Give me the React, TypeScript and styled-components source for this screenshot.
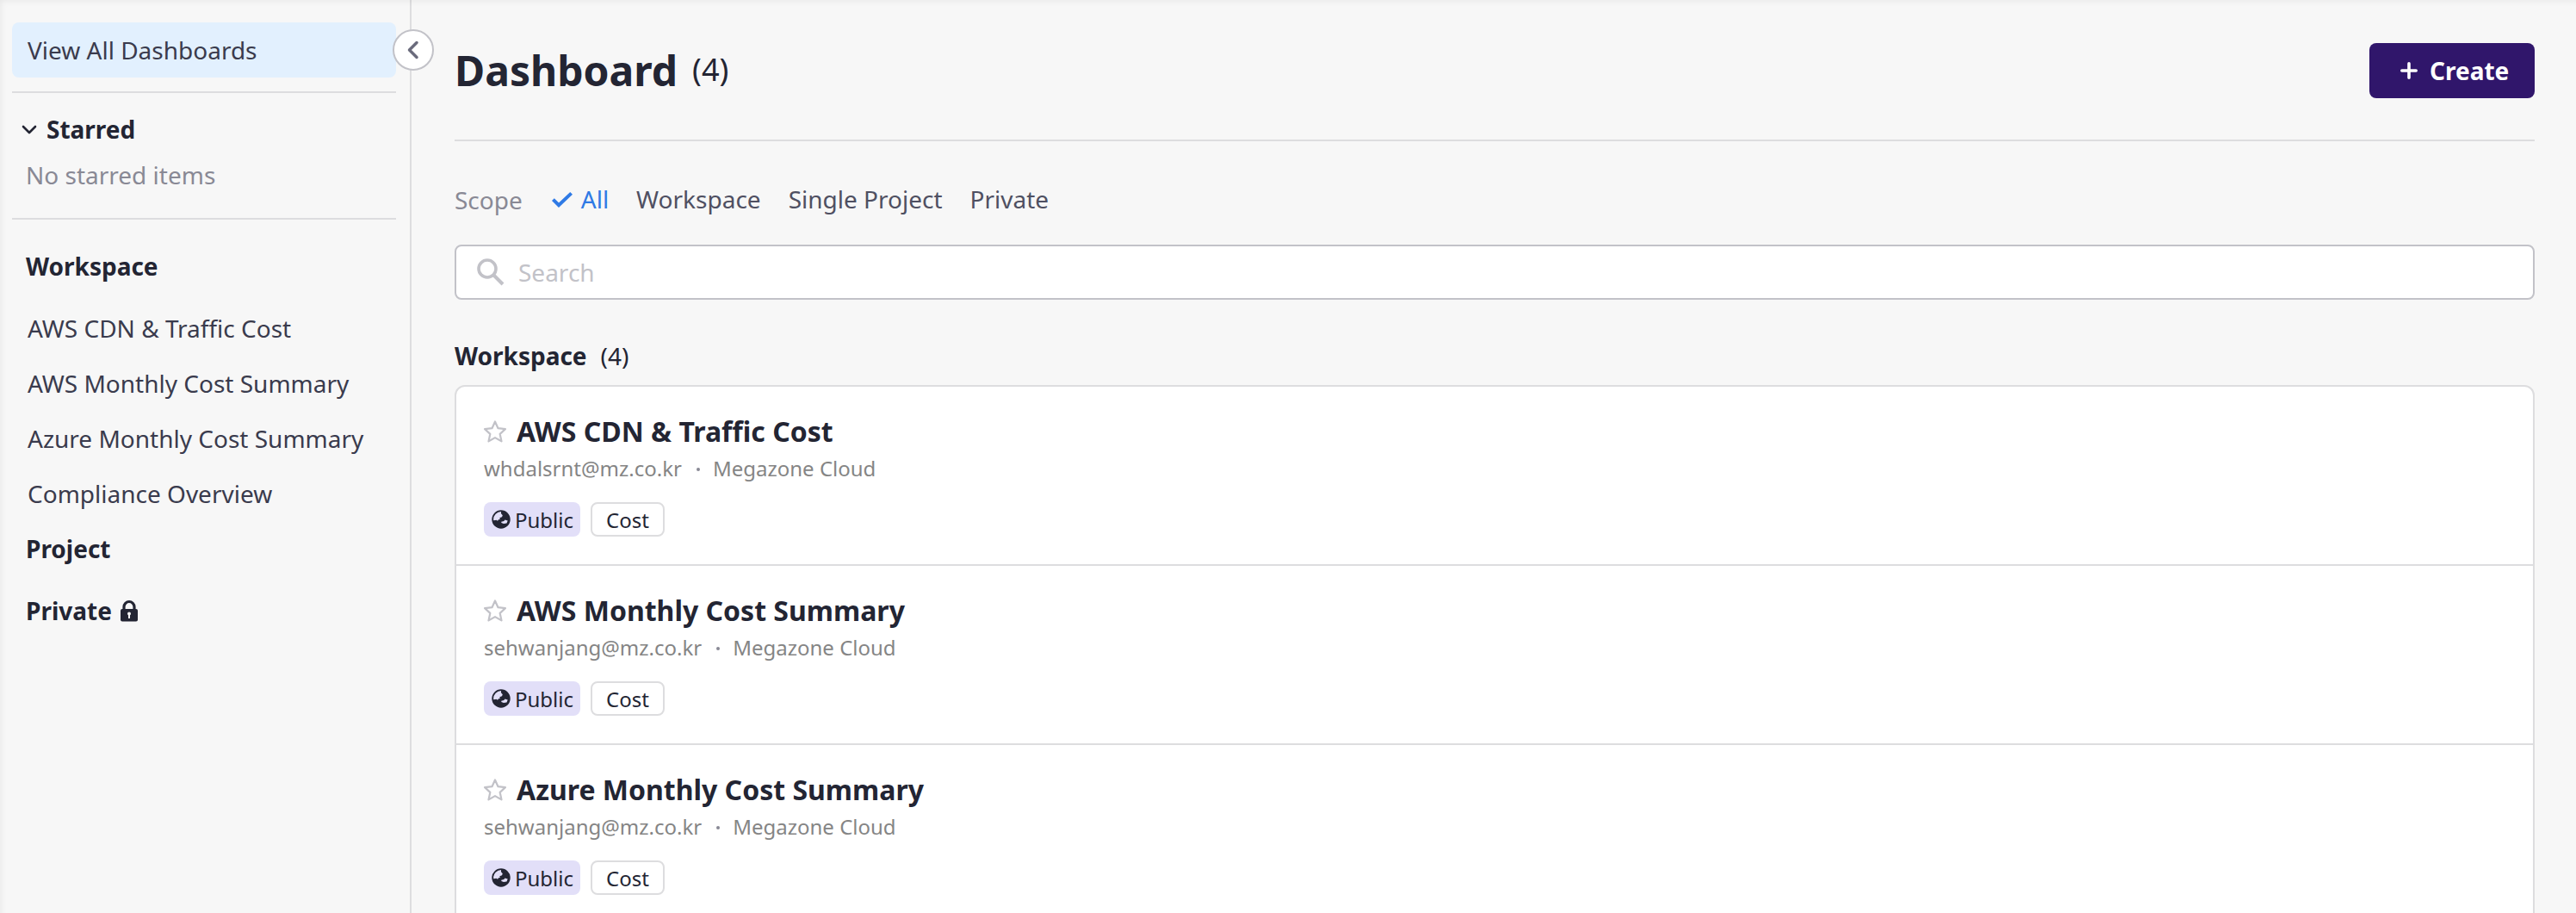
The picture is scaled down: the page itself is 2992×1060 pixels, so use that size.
import React from "react";
import styled, { createGlobalStyle } from "styled-components";

const ink = "#232533";
const line = "#dddddf";

const Global = createGlobalStyle`
  *, *::before, *::after { box-sizing: border-box; }
  html, body { margin: 0; padding: 0; background: #f7f7f7; }
  body { font-family: "Noto Sans", sans-serif; color: ${ink}; overflow: hidden; }
  button { font: inherit; color: inherit; padding: 0; border: 0; background: none; }
  h1, h2, h3, p, ul { margin: 0; padding: 0; font: inherit; list-style: none; }
`;

const Page = styled.div`
  position: relative;
  display: flex;
  height: 1060px;
  overflow: hidden;
  background: #f7f7f7;
  &::after {
    content: "";
    position: absolute;
    inset: 0 -20px -20px 0;
    pointer-events: none;
    box-shadow: inset 0 0 8px rgba(0, 0, 0, 0.08);
  }
`;

const Sidebar = styled.aside`
  position: relative;
  flex: none;
  width: 478px;
  padding: 26px 16px 0 14px;
  border-right: 2px solid ${line};
`;

const SideLink = styled.a<{ $active?: boolean }>`
  display: flex;
  align-items: center;
  height: 64px;
  padding: 0 18px;
  border-radius: 8px;
  font-size: 28px;
  white-space: nowrap;
  color: #3a3b4d;
  background: ${(p) => (p.$active ? "#e2f0fe" : "transparent")};
`;

const Rule = styled.hr<{ $top: number }>`
  height: 2px;
  margin: ${(p) => p.$top}px 0 0;
  border: 0;
  background: ${line};
`;

const StarredToggle = styled.button`
  display: flex;
  align-items: center;
  gap: 10px;
  height: 40px;
  margin-top: 22px;
  padding-left: 10px;
  font-size: 28px;
  font-weight: 700;
`;

const EmptyNote = styled.p`
  margin-top: 13px;
  padding-left: 16px;
  height: 40px;
  line-height: 40px;
  font-size: 28px;
  color: #898995;
`;

const GroupTitle = styled.h2<{ $top: number; $bottom: number }>`
  display: flex;
  align-items: center;
  gap: 8px;
  height: 40px;
  margin: ${(p) => p.$top}px 0 ${(p) => p.$bottom}px;
  padding-left: 16px;
  font-size: 28px;
  font-weight: 700;
`;

const CollapseButton = styled.button`
  position: absolute;
  top: 34px;
  right: -28px;
  display: grid;
  place-items: center;
  width: 48px;
  height: 48px;
  border: 2px solid #c2c2c8;
  border-radius: 50%;
  background: #fff;
  z-index: 1;
`;

const Main = styled.main`
  flex: 1;
  min-width: 0;
  padding: 50px 48px 0 50px;
`;

const Header = styled.header`
  display: flex;
  align-items: center;
  justify-content: space-between;
  height: 64px;
`;

const Heading = styled.h1`
  display: flex;
  align-items: center;
  gap: 17px;
  font-size: 48px;
  line-height: 64px;
  font-weight: 700;
`;

const HeadingCount = styled.span`
  margin-bottom: 2px;
  font-size: 36px;
  font-weight: 400;
`;

const CreateButton = styled.button`
  display: flex;
  align-items: center;
  gap: 14px;
  width: 192px;
  height: 64px;
  padding-left: 36px;
  border-radius: 8px;
  background: #30166b;
  color: #fff;
  font-size: 28px;
  font-weight: 700;
`;

const ScopeBar = styled.div`
  display: flex;
  align-items: center;
  height: 40px;
  margin-top: 48px;
  font-size: 28px;
`;

const ScopeLabel = styled.span`
  margin-right: 32px;
  color: #898995;
`;

const ScopeOption = styled.button<{ $active?: boolean }>`
  display: flex;
  align-items: center;
  gap: 10px;
  margin: 0 32px 2px 0;
  color: ${(p) => (p.$active ? "#2f7ae5" : "#4f5062")};
`;

const SearchBox = styled.label`
  display: flex;
  align-items: center;
  gap: 16px;
  height: 64px;
  margin-top: 32px;
  padding-left: 24px;
  border: 2px solid #c2c2c8;
  border-radius: 8px;
  background: #fff;
`;

const SearchInput = styled.input`
  flex: 1;
  border: 0;
  padding: 0;
  outline: 0;
  background: none;
  font: 28px "Noto Sans", sans-serif;
  &::placeholder { color: #c2c2c8; opacity: 1; }
`;

const ListTitle = styled.h2`
  display: flex;
  align-items: center;
  gap: 16px;
  height: 40px;
  margin: 45px 0 14px;
  font-size: 28px;
  font-weight: 700;
`;

const ListCount = styled.span`
  font-weight: 400;
`;

const Board = styled.ul`
  border: 2px solid ${line};
  border-radius: 12px;
  background: #fff;
  overflow: hidden;
`;

const Item = styled.li`
  height: 208px;
  padding: 29px 32px 0;
  border-bottom: 2px solid ${line};
`;

const ItemTitle = styled.h3`
  display: flex;
  align-items: center;
  gap: 12px;
  height: 44px;
  font-size: 32px;
  font-weight: 700;
`;

const Meta = styled.p`
  display: flex;
  align-items: center;
  height: 32px;
  margin-top: 5px;
  font-size: 24px;
  color: #858585;
`;

const Dot = styled.span`
  width: 4px;
  height: 4px;
  margin: 3px 15px 0 17px;
  border-radius: 50%;
  background: #898995;
`;

const Tags = styled.div`
  display: flex;
  gap: 12px;
  margin-top: 24px;
`;

const Tag = styled.span<{ $filled?: boolean }>`
  display: flex;
  align-items: center;
  gap: 4px;
  height: 40px;
  padding: ${(p) => (p.$filled ? "0 8px" : "0 16px")};
  border: ${(p) => (p.$filled ? "0" : `2px solid ${line}`)};
  border-radius: 8px;
  background: ${(p) => (p.$filled ? "#e2dff8" : "#fff")};
  font-size: 24px;
`;

const Icon = styled.svg`
  flex: none;
  display: block;
`;

const StarIcon = styled(Icon)`
  margin-top: 2px;
`;

const Globe = () => (
  <Icon width="24" height="24" viewBox="0 0 24 24">
    <circle cx="12" cy="12" r="9.8" fill="none" stroke={ink} strokeWidth="1.8" />
    <path fill={ink} d="M12 2C17.500 2 22 6 22 12s-4.500 10-10 10S2 17.500 2 13.500l4.500-.8 1.500 1 1-1.500 1.800-.2-.5-1.800 2.700-1 .8-2-1.800-2z" />
    <path fill="#e2dff8" d="M12.300 14.800l3-.8 1.200-1.400 3.200 1-1.200 3-3.500.3-2.700-.8z" />
  </Icon>
);

const Star = () => (
  <StarIcon width="26" height="28" viewBox="1 0 26 28" fill="none" stroke="#c2c2c8" strokeWidth="2.2" strokeLinejoin="round">
    <path d="M14 2.500l3.500 7.700 8.400.9-6.200 5.800 1.800 8.500L14 21.100l-7.500 4.300 1.800-8.500-6.200-5.800 8.400-.9z" />
  </StarIcon>
);

const shared = ["AWS CDN & Traffic Cost", "AWS Monthly Cost Summary", "Azure Monthly Cost Summary", "Compliance Overview"];

const boards = [
  { name: shared[0], owner: "whdalsrnt@mz.co.kr" },
  { name: shared[1], owner: "sehwanjang@mz.co.kr" },
  { name: shared[2], owner: "sehwanjang@mz.co.kr" },
];

export default function App() {
  return (
    <Page>
      <Global />
      <Sidebar>
        <SideLink $active>View All Dashboards</SideLink>
        <Rule $top={16} />
        <StarredToggle>
          <Icon width="20" height="20" viewBox="0 0 20 20" fill="none" stroke={ink} strokeWidth="2.6" strokeLinecap="round" strokeLinejoin="round">
            <path d="M3 7l7 7 7-7" />
          </Icon>
          Starred
        </StarredToggle>
        <EmptyNote>No starred items</EmptyNote>
        <Rule $top={30} />
        <GroupTitle $top={34} $bottom={20}>Workspace</GroupTitle>
        {shared.map((name) => (
          <SideLink key={name}>{name}</SideLink>
        ))}
        <GroupTitle $top={12} $bottom={32}>Project</GroupTitle>
        <GroupTitle $top={0} $bottom={0}>
          Private
          <Icon width="24" height="28" viewBox="0 0 24 28">
            <path d="M6 13V9.500a6 6 0 0 1 12 0v3.500" fill="none" stroke={ink} strokeWidth="3.200" />
            <rect x="2" y="12" width="20" height="14.500" rx="2" fill={ink} />
            <path d="M12 17v6" stroke="#f7f7f7" strokeWidth="2" />
            <circle cx="12" cy="17.500" r="2" fill="#f7f7f7" />
          </Icon>
        </GroupTitle>
        <CollapseButton aria-label="Collapse">
          <Icon width="24" height="24" viewBox="0 0 24 24" fill="none" stroke="#6a6b7c" strokeWidth="3.500" strokeLinecap="round" strokeLinejoin="round">
            <path d="M16 3.500L7.500 12l8.500 8.500" />
          </Icon>
        </CollapseButton>
      </Sidebar>
      <Main>
        <Header>
          <Heading>
            Dashboard <HeadingCount>(4)</HeadingCount>
          </Heading>
          <CreateButton>
            <Icon width="20" height="20" viewBox="0 0 20 20" stroke="#fff" strokeWidth="3.600" strokeLinecap="round">
              <path d="M10 1.800v16.400M1.800 10h16.400" />
            </Icon>
            Create
          </CreateButton>
        </Header>
        <Rule $top={48} />
        <ScopeBar>
          <ScopeLabel>Scope</ScopeLabel>
          <ScopeOption $active>
            <Icon width="26" height="24" viewBox="0 0 26 24" fill="none" stroke="#2f7ae5" strokeWidth="4">
              <path d="M3.400 12.600l6.600 6.600L24.600 5.400" />
            </Icon>
            All
          </ScopeOption>
          <ScopeOption>Workspace</ScopeOption>
          <ScopeOption>Single Project</ScopeOption>
          <ScopeOption>Private</ScopeOption>
        </ScopeBar>
        <SearchBox>
          <Icon width="32" height="32" viewBox="0 0 32 32" fill="none" stroke="#c2c2c8" strokeWidth="3.600">
            <circle cx="12" cy="12" r="10" />
            <path d="M19.500 19.500L30 30" strokeWidth="4" />
          </Icon>
          <SearchInput placeholder="Search" />
        </SearchBox>
        <ListTitle>
          Workspace <ListCount>(4)</ListCount>
        </ListTitle>
        <Board>
          {boards.map((b) => (
            <Item key={b.name}>
              <ItemTitle>
                <Star />
                {b.name}
              </ItemTitle>
              <Meta>
                {b.owner}
                <Dot />
                Megazone Cloud
              </Meta>
              <Tags>
                <Tag $filled>
                  <Globe />
                  Public
                </Tag>
                <Tag>Cost</Tag>
              </Tags>
            </Item>
          ))}
        </Board>
      </Main>
    </Page>
  );
}
